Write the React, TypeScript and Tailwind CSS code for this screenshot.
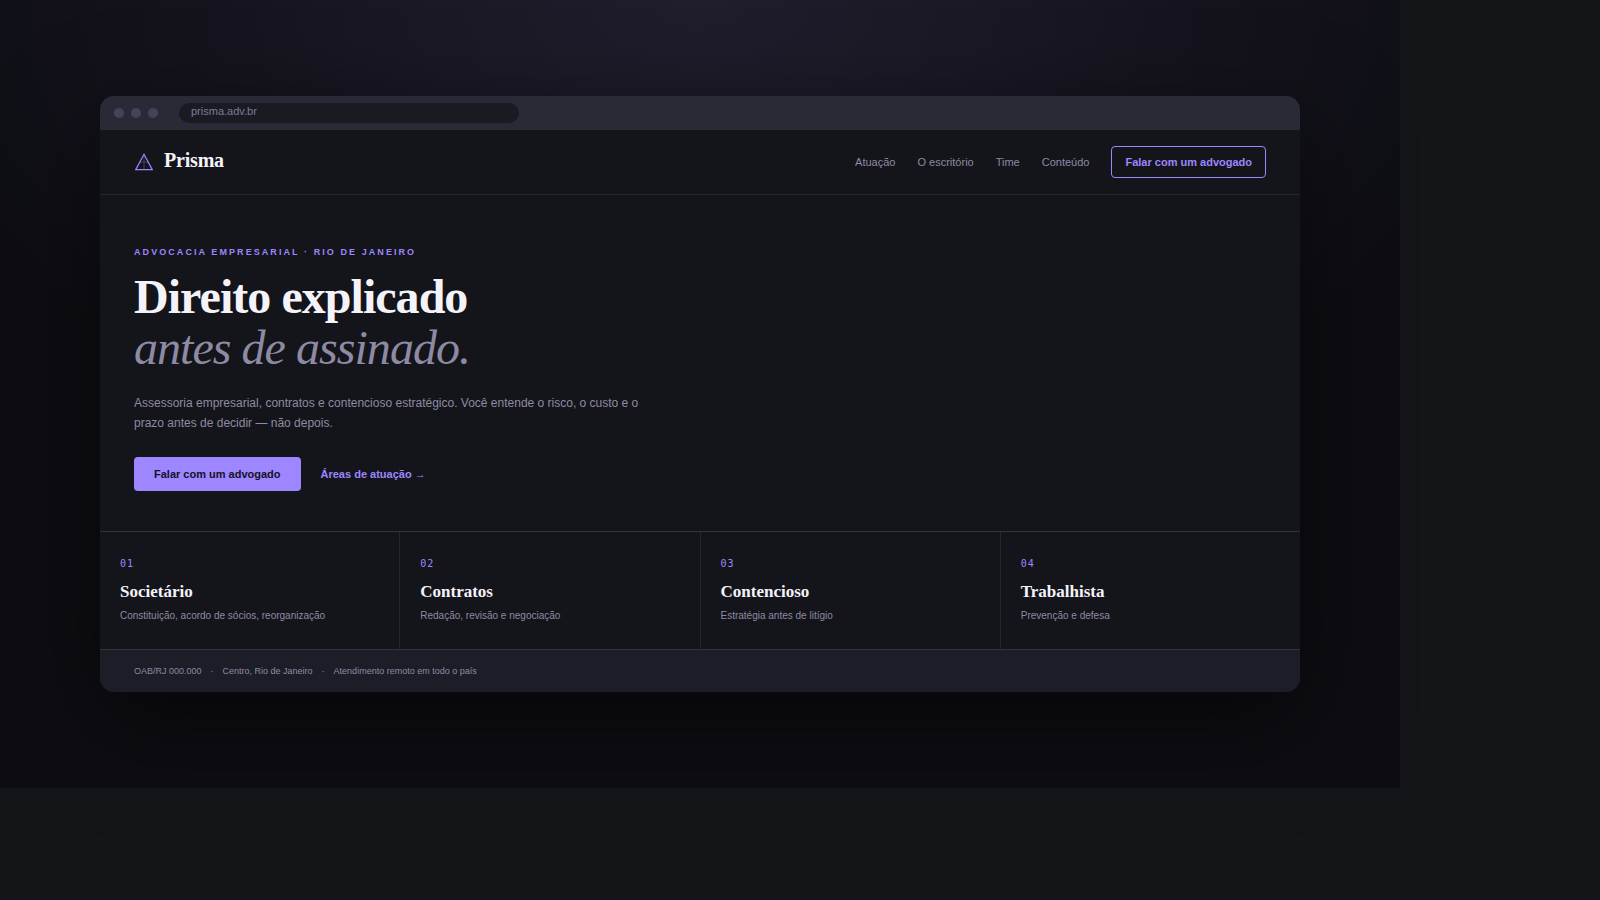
const areas = [
  { id: "01", title: "Societário", text: "Constituição, acordo de sócios, reorganização" },
  { id: "02", title: "Contratos", text: "Redação, revisão e negociação" },
  { id: "03", title: "Contencioso", text: "Estratégia antes de litígio" },
  { id: "04", title: "Trabalhista", text: "Prevenção e defesa" },
];

const links = ["Atuação", "O escritório", "Time", "Conteúdo"];

const footer = ["OAB/RJ 000.000", "Centro, Rio de Janeiro", "Atendimento remoto em todo o país"];

function Logo() {
  return (
    <svg width="20" height="20" viewBox="0 0 20 20" fill="none" stroke="#9d86ff" aria-hidden="true">
      <path d="M10 2.2 18.3 17.6H1.7Z" strokeWidth="1.2" />
      <path d="M10 2.5V17.6M6 11 10 9.4 14 11" strokeWidth="0.8" opacity="0.4" />
    </svg>
  );
}

function BrowserBar() {
  return (
    <div className="flex h-[34px] items-center bg-[#2a2a37] px-3.5">
      <div className="flex gap-[7px]">
        <span className="size-2.5 rounded-full bg-[#454359]" />
        <span className="size-2.5 rounded-full bg-[#454359]" />
        <span className="size-2.5 rounded-full bg-[#454359]" />
      </div>
      <div className="ml-[21px] h-5 w-full max-w-[340px] rounded-full bg-[#1a1a23] px-3 text-[11px] leading-[17px] text-[#7f7c93]">
        prisma.adv.br
      </div>
    </div>
  );
}

export default function App() {
  return (
    <div className="min-h-screen bg-[#141519] font-['Liberation_Sans',Arial,sans-serif] text-[#8e8aa3]">
      <div className="w-full max-w-[1400px] bg-[#0d0d13] bg-[radial-gradient(ellipse_60%_60%_at_50%_0%,#201e2d_0%,#0d0d13_100%)] px-[100px] py-24">
        <div className="overflow-hidden rounded-[14px] bg-[#14151a] shadow-[0_30px_100px_rgba(0,0,0,0.5)]">
          <BrowserBar />
          <header className="flex items-center justify-between border-b border-[#25252d] px-[34px] py-4">
            <a href="#" className="flex items-center gap-2.5">
              <Logo />
              <span className="pb-1 font-['Liberation_Serif',serif] text-[20px] leading-6 font-bold tracking-[-0.01em] text-[#f4f3fa]">
                Prisma
              </span>
            </a>
            <nav className="flex items-center gap-[22px] text-[11px] leading-4">
              {links.map((l) => (
                <a key={l} href="#">
                  {l}
                </a>
              ))}
              <button className="h-8 rounded border border-[#9d86ff] px-[13px] font-bold text-[#9d86ff]">
                Falar com um advogado
              </button>
            </nav>
          </header>
          <section className="px-[34px] pt-[51px] pb-10">
            <p className="text-[9px] leading-3 font-bold tracking-[0.23em] text-[#9d86ff] uppercase">
              Advocacia empresarial · Rio de Janeiro
            </p>
            <h1 className="mt-[13px] font-['Liberation_Serif',serif] text-[48px] leading-[51px] font-bold tracking-[-0.02em] text-[#f4f3fa]">
              Direito explicado
              <br />
              <em className="font-normal text-[#8e8aa3]">antes de assinado.</em>
            </h1>
            <p className="mt-5 max-w-[520px] text-[12px] leading-5">
              Assessoria empresarial, contratos e contencioso estratégico. Você entende o risco, o custo e o prazo antes
              de decidir — não depois.
            </p>
            <div className="mt-6 flex items-center gap-5 text-[11px] leading-4 font-bold">
              <button className="h-[34px] rounded bg-[#9d86ff] px-5 text-[#14121f]">Falar com um advogado</button>
              <a href="#" className="text-[#9d86ff]">
                Áreas de atuação →
              </a>
            </div>
          </section>
          <section className="grid grid-cols-4 gap-px border-y border-[#33333d] bg-[#25252d]">
            {areas.map((a) => (
              <article key={a.id} className="bg-[#14151a] px-5 pt-6 pb-[26px]">
                <p className="font-['DejaVu_Sans_Mono',monospace] text-[10px] leading-4 tracking-[0.1em] text-[#9d86ff]">
                  {a.id}
                </p>
                <h2 className="mt-2 font-['Liberation_Serif',serif] text-[17px] leading-6 font-bold text-[#f4f3fa]">
                  {a.title}
                </h2>
                <p className="mt-1 text-[10px] leading-[15px]">{a.text}</p>
              </article>
            ))}
          </section>
          <footer className="flex items-center bg-[#1d1d27] px-[34px] py-[15px] text-[9px] leading-3">
            {footer.map((f, i) => (
              <span key={f}>
                {i > 0 && <span className="mx-[9px]">·</span>}
                {f}
              </span>
            ))}
          </footer>
        </div>
      </div>
    </div>
  );
}
